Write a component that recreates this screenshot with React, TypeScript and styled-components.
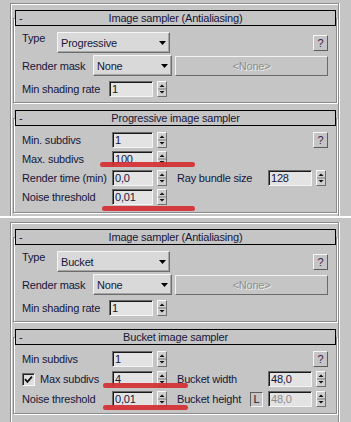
import React from "react";
import styled, { createGlobalStyle } from "styled-components";

const GlobalStyle = createGlobalStyle`
  html, body {
    margin: 0;
    padding: 0;
    background: #c5c5c5;
  }
  body {
    font-family: "Liberation Sans", Arial, sans-serif;
    font-size: 11px;
    letter-spacing: -0.2px;
    color: #16163a;
  }
`;

const Page = styled.div`
  position: relative;
  width: 351px;
  height: 422px;
  overflow: hidden;
  background: #c5c5c5;
`;

const Shot = styled.section<{ $height: number }>`
  box-sizing: border-box;
  height: ${(p) => p.$height}px;
  padding-top: 3px;
  overflow: hidden;
`;

const Divider = styled.div`
  height: 2px;
  margin-bottom: 1px;
  background: #fff;
`;

const Panel = styled.div`
  box-sizing: border-box;
  width: 329px;
  height: 100%;
  margin-left: 10px;
  padding: 14px 1px 0 2px;
  border: 1px solid #8a8a8a;
  border-bottom: none;
  box-shadow: inset 1px 1px 0 #fff, 1px 0 0 #fff;
`;

const Frame = styled.div<{ $pb: number }>`
  padding: 0 8px ${(p) => p.$pb}px;
  border: 1px solid #8a8a8a;
  box-shadow: inset 1px 1px 0 #fff, 1px 1px 0 #fff;

  & + & {
    margin-top: 15px;
  }
`;

const Header = styled.div`
  display: grid;
  grid-template-columns: 1fr auto 1fr;
  align-items: center;
  box-sizing: border-box;
  height: 16px;
  margin: -9px -8px 6px -7px;
  border: 1px solid #000;
  background: #c5c5c5;
  line-height: 14px;
`;

const Collapse = styled.span`
  padding-left: 3px;
`;

const Row = styled.div<{ $mt?: number; $h: number }>`
  display: flex;
  align-items: center;
  height: ${(p) => p.$h}px;
  margin-top: ${(p) => p.$mt ?? 0}px;
`;

const Label = styled.span<{ $w?: number; $top?: boolean }>`
  grid-column: 1;
  flex: none;
  width: ${(p) => (p.$w ? `${p.$w}px` : "auto")};
  align-self: ${(p) => (p.$top ? "flex-start" : "center")};
  line-height: ${(p) => (p.$top ? "13px" : "16px")};
  white-space: nowrap;
`;

const Select = styled.div<{ $w: number }>`
  box-sizing: border-box;
  display: flex;
  align-items: center;
  justify-content: space-between;
  width: ${(p) => p.$w}px;
  height: 21px;
  padding: 0 3px;
  background: #d9d9d9;
  border: 1px solid;
  border-color: #f6f6f6 #6c6c6c #6c6c6c #f6f6f6;
  box-shadow: inset -1px -1px 0 #a6a6a6;
`;

const HelpButton = styled.div`
  box-sizing: border-box;
  display: grid;
  place-items: center;
  width: 15px;
  height: 16px;
  margin-left: auto;
  border: 1px solid;
  border-color: #f6f6f6 #5c5c5c #5c5c5c #f6f6f6;
  color: #3c1c48;
  line-height: 12px;
`;

const GhostButton = styled.div`
  box-sizing: border-box;
  flex: 1;
  height: 20px;
  margin-left: 3px;
  border: 1px solid;
  border-color: #f2f2f2 #6a6a6a #6a6a6a #f2f2f2;
  color: #8e8e8e;
  text-shadow: 1px 1px 0 #ececec;
  text-align: center;
  line-height: 18px;
`;

const SpinWrap = styled.div`
  display: flex;
  gap: 4px;
`;

const Field = styled.div<{ $w: number; $disabled?: boolean }>`
  box-sizing: border-box;
  width: ${(p) => p.$w}px;
  height: 16px;
  padding-left: 2px;
  overflow: hidden;
  white-space: nowrap;
  line-height: 15px;
  background: #e3e3e3;
  border: 1px solid;
  border-color: #6a6a6a #f4f4f4 #f4f4f4 #6a6a6a;
  box-shadow: inset 1px 1px 0 #1a1a1a;
  color: ${(p) => (p.$disabled ? "#8c8c8c" : "inherit")};
`;

const ArrowBox = styled.div`
  box-sizing: border-box;
  display: grid;
  place-items: center;
  width: 10px;
  height: 16px;
  background: #cfcfcf;
  border: 1px solid;
  border-color: #f8f8f8 #6e6e6e #6e6e6e #f8f8f8;
`;

const Grid = styled.div<{ $gap: number }>`
  display: grid;
  grid-template-columns: 90px 55px 10px 91px 1fr;
  grid-auto-rows: 16px;
  row-gap: ${(p) => p.$gap}px;
  align-items: center;
`;

const RightLabel = styled.span`
  grid-column: 4;
  display: flex;
  align-items: center;
  justify-content: space-between;
  padding-right: 5px;
  line-height: 16px;
  white-space: nowrap;
`;

const RightCell = styled.div`
  grid-column: 5;
  display: flex;
  justify-content: flex-start;
`;

const CheckLabel = styled.span`
  grid-column: 1;
  display: flex;
  align-items: center;
  gap: 5px;
  line-height: 16px;
  white-space: nowrap;
`;

const CheckBox = styled.span`
  box-sizing: border-box;
  display: grid;
  place-items: center;
  width: 13px;
  height: 13px;
  background: #dedede;
  border: 1px solid;
  border-color: #6a6a6a #fafafa #fafafa #6a6a6a;
  box-shadow: inset 1px 1px 0 #222;
`;

const LockButton = styled.span`
  box-sizing: border-box;
  display: grid;
  place-items: center;
  width: 13px;
  height: 15px;
  border: 1px solid;
  border-color: #5c5c5c #f2f2f2 #f2f2f2 #5c5c5c;
  line-height: 12px;
`;

const Mark = styled.div<{ $x: number; $y: number; $w: number }>`
  position: absolute;
  left: ${(p) => p.$x}px;
  top: ${(p) => p.$y}px;
  width: ${(p) => p.$w}px;
  height: 5px;
  border-radius: 3px;
  background: rgba(212, 46, 50, 0.92);
`;

function Caret() {
  return (
    <svg width="7" height="4" viewBox="0 0 7 4">
      <path d="M0 0H7L3.5 4Z" fill="#000" />
    </svg>
  );
}

function SpinArrows() {
  return (
    <ArrowBox>
      <svg width="8" height="14" viewBox="0 0 8 14">
        <path d="M4 2.5L6.5 5H1.5Z" fill="#111" />
        <rect x="0" y="6.5" width="8" height="1" fill="#7a7a7a" />
        <path d="M1.5 9H6.5L4 11.5Z" fill="#111" />
      </svg>
    </ArrowBox>
  );
}

function Spinner({ value, w = 41, disabled }: { value: string; w?: number; disabled?: boolean }) {
  return (
    <SpinWrap>
      <Field $w={w} $disabled={disabled}>
        {value}
      </Field>
      <SpinArrows />
    </SpinWrap>
  );
}

function RolloutHeader({ title }: { title: string }) {
  return (
    <Header>
      <Collapse>-</Collapse>
      <span>{title}</span>
      <span />
    </Header>
  );
}

function SamplerFrame({ type }: { type: string }) {
  return (
    <Frame $pb={5}>
      <RolloutHeader title="Image sampler (Antialiasing)" />
      <Row $h={21}>
        <Label $w={35} $top>
          Type
        </Label>
        <Select $w={113}>
          <span>{type}</span>
          <Caret />
        </Select>
        <HelpButton>?</HelpButton>
      </Row>
      <Row $h={21} $mt={2}>
        <Label $w={71}>Render mask</Label>
        <Select $w={79}>
          <span>None</span>
          <Caret />
        </Select>
        <GhostButton>&lt;None&gt;</GhostButton>
      </Row>
      <Row $h={16} $mt={5}>
        <Label $w={87}>Min shading rate</Label>
        <Spinner value="1" w={44} />
      </Row>
    </Frame>
  );
}

function ProgressiveFrame() {
  return (
    <Frame $pb={7}>
      <RolloutHeader title="Progressive image sampler" />
      <Grid $gap={3}>
        <Label>Min. subdivs</Label>
        <Spinner value="1" />
        <RightCell>
          <HelpButton>?</HelpButton>
        </RightCell>

        <Label>Max. subdivs</Label>
        <Spinner value="100" />

        <Label>Render time (min)</Label>
        <Spinner value="0,0" />
        <RightLabel>Ray bundle size</RightLabel>
        <RightCell>
          <Spinner value="128" w={44} />
        </RightCell>

        <Label>Noise threshold</Label>
        <Spinner value="0,01" />
      </Grid>
    </Frame>
  );
}

function BucketFrame() {
  return (
    <Frame $pb={6}>
      <RolloutHeader title="Bucket image sampler" />
      <Grid $gap={4}>
        <Label>Min subdivs</Label>
        <Spinner value="1" />
        <RightCell>
          <HelpButton>?</HelpButton>
        </RightCell>

        <CheckLabel>
          <CheckBox>
            <svg width="9" height="9" viewBox="0 0 9 9">
              <path d="M1 4.2L3.4 6.8L8 1.6" stroke="#111" strokeWidth="1.8" fill="none" />
            </svg>
          </CheckBox>
          Max subdivs
        </CheckLabel>
        <Spinner value="4" />
        <RightLabel>Bucket width</RightLabel>
        <RightCell>
          <Spinner value="48,0" w={44} />
        </RightCell>

        <Label>Noise threshold</Label>
        <Spinner value="0,01" />
        <RightLabel>
          Bucket height
          <LockButton>L</LockButton>
        </RightLabel>
        <RightCell>
          <Spinner value="48,0" w={44} disabled />
        </RightCell>
      </Grid>
    </Frame>
  );
}

export default function App() {
  return (
    <Page>
      <GlobalStyle />
      <Shot $height={216}>
        <Panel>
          <SamplerFrame type="Progressive" />
          <ProgressiveFrame />
        </Panel>
      </Shot>
      <Divider />
      <Shot $height={203}>
        <Panel>
          <SamplerFrame type="Bucket" />
          <BucketFrame />
        </Panel>
      </Shot>
      <Mark $x={100} $y={162} $w={95} />
      <Mark $x={102} $y={206} $w={93} />
      <Mark $x={103} $y={383} $w={85} />
      <Mark $x={103} $y={405} $w={85} />
    </Page>
  );
}
